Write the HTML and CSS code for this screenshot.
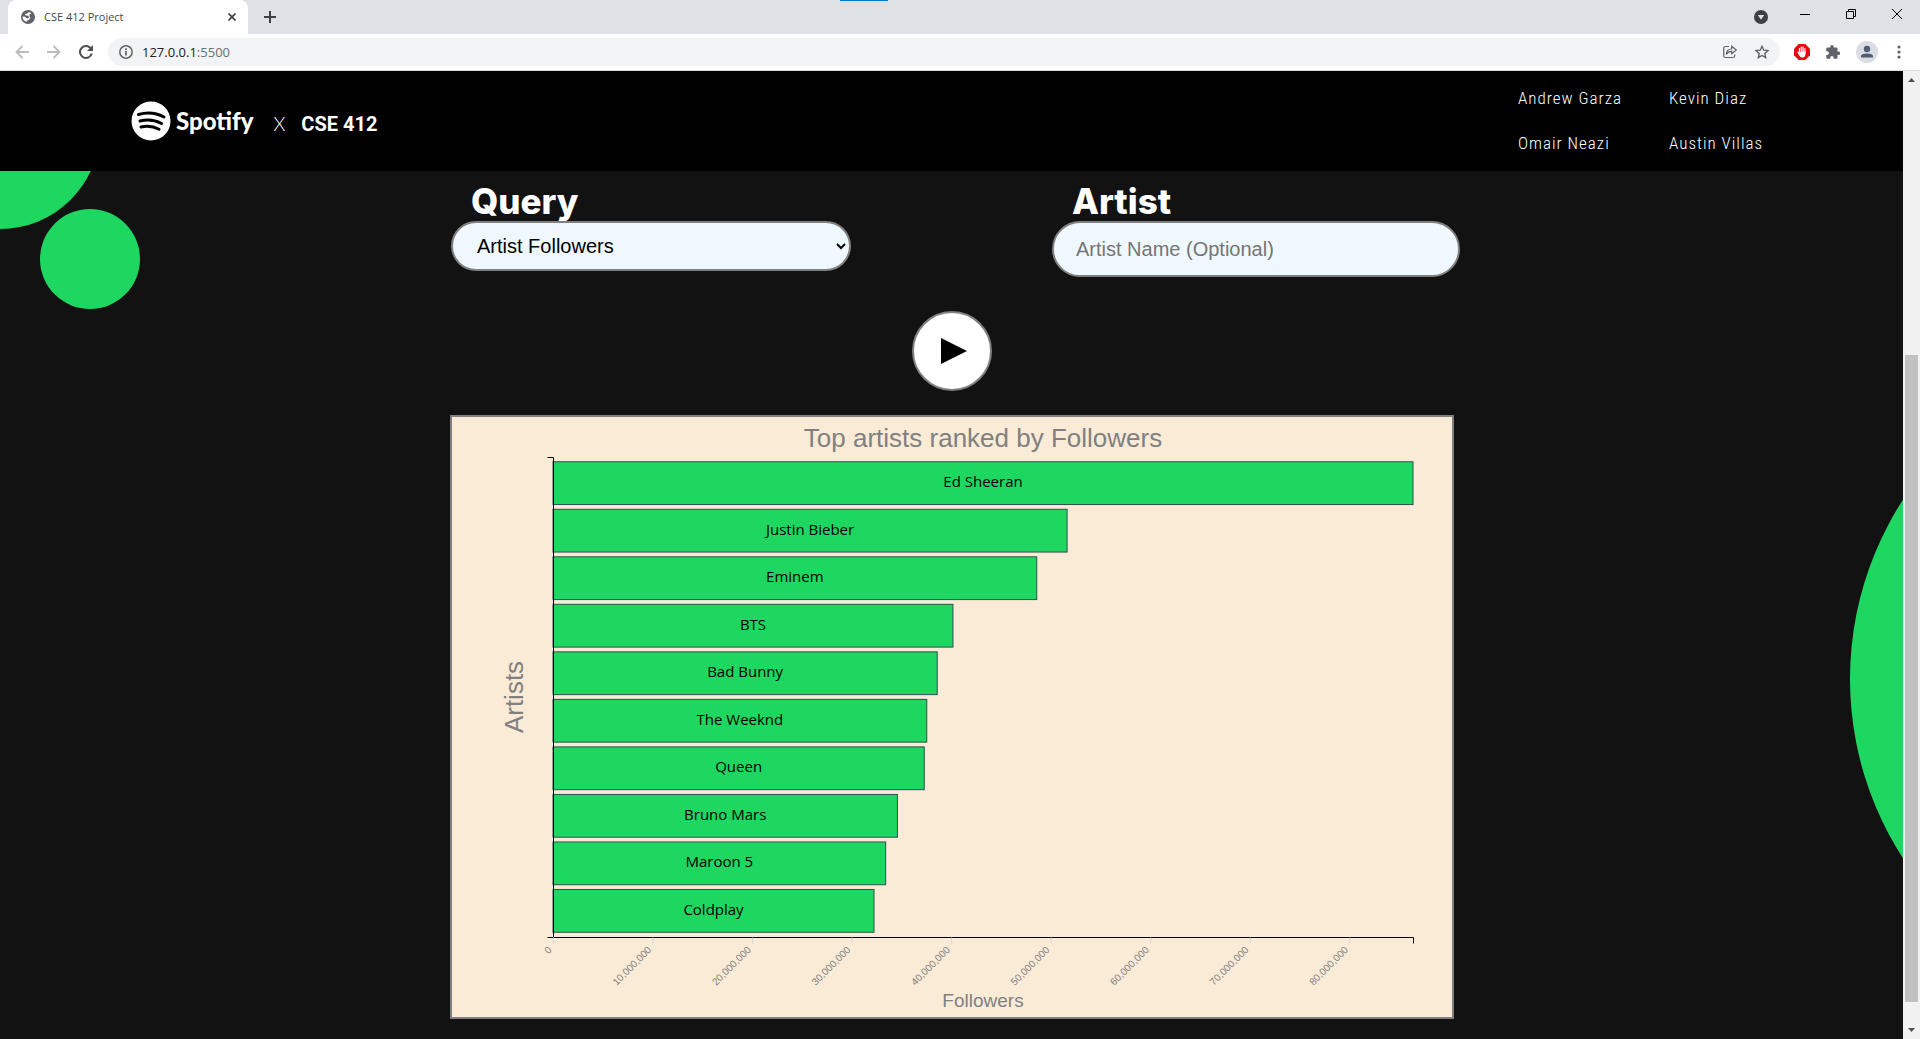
FILE: index.html
```html
<!DOCTYPE html>
<html lang="en">
<head>
<meta charset="utf-8">
<title>CSE 412 Project</title>
<link rel="stylesheet" href="styles.css">
</head>
<body>
<div class="tabstrip">
  <span class="load-bar"></span>
  <div class="tab">
    <svg width="14" height="14" viewBox="0 0 14 14"><circle cx="7" cy="7" r="7" fill="#5f6368"/><path d="M7.500 2.200L6 3.800q-1.500-.4-2.300.6L5 5.500l2.200.2 1 1.500-1.500 1.200-1.500-.4-1.200-1.200-2.500-.3q0 4 4 5.500l.6-1.600 2-.7 1.200-1.900-.9-1.900.3-1.700 1.800-.8Q9.500 2.300 7.500 2.200z" fill="#fff"/></svg>
    <span class="tab-title">CSE 412 Project</span>
    <button class="icon" aria-label="Close tab"><svg width="8" height="8" viewBox="0 0 8 8"><path d="M.5.5l7 7M7.500.5l-7 7" stroke="#3c4043" stroke-width="1.600"/></svg></button>
  </div>
  <button class="icon new-tab" aria-label="New tab"><svg width="12" height="12" viewBox="0 0 12 12"><path d="M6 0v12M0 6h12" stroke="#3c4043" stroke-width="2"/></svg></button>
  <div class="window-controls">
    <button class="icon" aria-label="Search tabs"><svg width="14" height="14" viewBox="0 0 14 14"><circle cx="7" cy="7" r="7" fill="#3c4043"/><path d="M3.800 5h6.400L7 9.800z" fill="#dee1e6"/></svg></button>
    <button class="icon" aria-label="Minimize"><svg width="10" height="10" viewBox="0 0 10 10"><path d="M0 5.500h10" stroke="#000"/></svg></button>
    <button class="icon" aria-label="Restore"><svg width="10" height="10" viewBox="0 0 10 10"><path d="M.5 2.500h7v7h-7zM2.500 2.500v-2h7v7h-2" fill="none" stroke="#000"/></svg></button>
    <button class="icon" aria-label="Close"><svg width="10" height="10" viewBox="0 0 10 10"><path d="M0 0l10 10M10 0L0 10" stroke="#000"/></svg></button>
  </div>
</div>
<div class="toolbar">
  <div class="nav-buttons">
    <button class="icon" aria-label="Back"><svg width="14" height="14" viewBox="0 0 14 14"><path d="M14 7H1.500M7.500 1L1.500 7l6 6" fill="none" stroke="#babcbe" stroke-width="1.800"/></svg></button>
    <button class="icon" aria-label="Forward"><svg width="14" height="14" viewBox="0 0 14 14"><path d="M0 7h12.500M6.500 1l6 6-6 6" fill="none" stroke="#babcbe" stroke-width="1.800"/></svg></button>
    <button class="icon" aria-label="Reload"><svg width="14" height="14" viewBox="0 0 14 14"><path d="M12.800 8.500A6 6 0 1 1 11.500 3" fill="none" stroke="#4c4f53" stroke-width="2"/><path d="M14 0v6H8z" fill="#4c4f53"/></svg></button>
  </div>
  <div class="omnibox">
    <svg width="14" height="14" viewBox="0 0 14 14"><circle cx="7" cy="7" r="6.200" fill="none" stroke="#5f6368" stroke-width="1.500"/><path d="M7 6v4.500M7 3.300v1.700" stroke="#5f6368" stroke-width="1.700"/></svg>
    <span class="url">127.0.0.1<span class="port">:5500</span></span>
    <button class="icon" aria-label="Share"><svg width="14" height="14" viewBox="0 0 14 14"><path d="M6 1.500H2.500Q.7 1.500.7 3.300v7.400q0 1.800 1.800 1.800h7.400q1.800 0 1.800-1.800V9.500M3.200 9.500Q3.500 4 8.700 4V1.200L13.400 5 8.700 8.700V6.400Q5 6.300 3.200 9.500z" fill="none" stroke="#5f6368" stroke-width="1.200"/></svg></button>
    <button class="icon" aria-label="Bookmark"><svg width="14" height="14" viewBox="0 0 14 14"><path d="M7 1.300l1.700 3.900 4.300.4-3.200 2.900.9 4.200L7 10.500l-3.700 2.200.9-4.200L1 5.600l4.300-.4z" fill="none" stroke="#5f6368" stroke-width="1.400"/></svg></button>
  </div>
  <div class="extensions">
    <button class="icon" aria-label="Ad blocker"><svg width="16" height="16" viewBox="0 0 16 16"><path d="M4.700 0h6.600L16 4.700v6.600L11.300 16H4.700L0 11.300V4.700z" fill="#e60a10"/><path d="M5.500 9V4.500M7.300 8V3M9.100 8V3M10.900 9V4.500" stroke="#fff" stroke-width="1.200" stroke-linecap="round"/><path d="M4.900 8l-1.200-.6q-.6.400-.2 1l1.700 3.200q1 1.900 3 1.900 3.300 0 3.300-3.500V7.500z" fill="#fff"/></svg></button>
    <button class="icon" aria-label="Extensions"><svg width="14" height="14" viewBox="0 0 14 14"><path d="M12.500 6.500h-1V3.800q0-1.300-1.300-1.300H7.700v-.8a1.700 1.700 0 0 0-3.400 0v.8H1.600Q.3 2.500.3 3.800v2.500h.9a1.800 1.800 0 0 1 0 3.600H.3v2.600q0 1.300 1.300 1.300h2.500v-.9a1.800 1.800 0 0 1 3.600 0v.9h2.500q1.300 0 1.300-1.300V9.900h1a1.700 1.700 0 0 0 0-3.400z" fill="#5f6368"/></svg></button>
    <button class="icon" aria-label="Profile"><svg width="22" height="22" viewBox="0 0 22 22"><circle cx="11" cy="11" r="11" fill="#dadde3"/><circle cx="11" cy="8" r="3.200" fill="#505d73"/><path d="M5 16.500v-1.300q0-2.700 6-2.700t6 2.700v1.300z" fill="#505d73"/></svg></button>
    <button class="icon" aria-label="Menu"><svg width="4" height="14" viewBox="0 0 4 14"><circle cx="2" cy="2" r="1.600" fill="#5f6368"/><circle cx="2" cy="7" r="1.600" fill="#5f6368"/><circle cx="2" cy="12" r="1.600" fill="#5f6368"/></svg></button>
  </div>
</div>
<div class="viewport">
  <div class="page">
    <header class="site-header">
      <div class="brand">
        <svg width="40" height="40" viewBox="0 0 40 40"><circle cx="20" cy="20" r="19.500" fill="#fff"/><path d="M7.500 13.500Q21 9.500 33 16M9 20q11.500-3 21.500 2.500M10 26q9.500-2.300 18 2.300" fill="none" stroke="#000" stroke-linecap="round" stroke-width="3"/></svg>
        <span class="brand-name">Spotify</span>
        <span class="brand-x">X</span>
        <span class="brand-course">CSE 412</span>
      </div>
      <nav class="authors">
        <a href="#">Andrew Garza</a>
        <a href="#">Kevin Diaz</a>
        <a href="#">Omair Neazi</a>
        <a href="#">Austin Villas</a>
      </nav>
    </header>
    <main class="content">
      <span class="bubble bubble-top"></span>
      <span class="bubble bubble-small"></span>
      <span class="bubble bubble-right"></span>
      <form class="query-form" onsubmit="return false">
        <div class="fields">
          <div class="field">
            <label for="query">Query</label>
            <select id="query"><option>Artist Followers</option></select>
          </div>
          <div class="field">
            <label for="artist">Artist</label>
            <input id="artist" type="text" placeholder="Artist Name (Optional)">
          </div>
        </div>
        <button class="play" type="submit" aria-label="Run query"><svg width="26" height="26" viewBox="0 0 26 26"><path d="M0 0l26 13L0 26z"/></svg></button>
      </form>
      <svg id="chart" class="chart" viewBox="0 0 1000 600" role="img" aria-label="Top artists ranked by Followers"></svg>
    </main>
  </div>
  <div class="scrollbar" aria-hidden="true">
    <svg width="17" height="17" viewBox="0 0 17 17"><path d="M5 11l3.500-4 3.500 4z" fill="#505050"/></svg>
    <span class="track-before"></span>
    <span class="thumb"></span>
    <span class="track-after"></span>
    <svg width="17" height="17" viewBox="0 0 17 17"><path d="M5 6l3.500 4L12 6z" fill="#505050"/></svg>
  </div>
</div>
<script src="script.js"></script>
</body>
</html>
```
FILE: styles.css
```css
* { box-sizing: border-box; }

body {
  margin: 0;
  min-height: 100vh;
  display: flex;
  flex-direction: column;
  background: #121212;
  font-family: "Liberation Sans", Arial, sans-serif;
}

svg { display: block; }

.icon {
  display: flex;
  padding: 0;
  border: 0;
  background: none;
}

/* Browser frame */
.tabstrip {
  position: relative;
  display: flex;
  align-items: center;
  height: 34px;
  padding-left: 8px;
  background: #dee1e6;
}

.load-bar {
  position: absolute;
  top: 0;
  left: 840px;
  width: 48px;
  height: 1px;
  background: #0078d7;
}

.tab {
  display: flex;
  align-items: center;
  gap: 9px;
  width: 240px;
  height: 34px;
  padding: 0 12px 0 13px;
  border-radius: 8px 8px 0 0;
  background: #fff;
}

.tab-title {
  flex: 1;
  font: 11px/16px "Open Sans", sans-serif;
  color: #45494d;
}

.new-tab { margin-left: 16px; }

.window-controls {
  display: flex;
  align-items: center;
  gap: 36px;
  margin-left: auto;
  padding: 0 18px 6px 0;
}

.window-controls .icon:first-child {
  margin-right: -4px;
  padding-top: 6px;
}

.toolbar {
  display: flex;
  align-items: center;
  height: 37px;
  padding: 0 19px 0 15px;
  border-bottom: 1px solid #d9dbdd;
  background: #fff;
}

.nav-buttons {
  display: flex;
  gap: 18px;
  margin-right: 15px;
}

.omnibox {
  flex: 1;
  display: flex;
  align-items: center;
  gap: 18px;
  height: 28px;
  padding: 0 11px;
  border-radius: 14px;
  background: #f1f3f4;
}

.url {
  flex: 1;
  margin-left: -9px;
  font: 13px/18px "Open Sans", sans-serif;
  color: #202124;
}

.port { color: #6b6f73; }

.extensions {
  display: flex;
  align-items: center;
  gap: 16px;
  padding-left: 14px;
}

.extensions .icon:last-child { margin-left: 3px; }

.viewport {
  flex: 1;
  display: flex;
}

.scrollbar {
  display: flex;
  flex-direction: column;
  align-items: center;
  width: 17px;
  background: #f1f1f1;
}

.track-before { flex: 267; }
.thumb { flex: 647; width: 13px; background: #c1c1c1; }
.track-after { flex: 20; }

/* Page */
.page {
  flex: 1;
  display: flex;
  flex-direction: column;
}

.site-header {
  display: flex;
  justify-content: space-between;
  align-items: center;
  padding: 5px 83px 5px 131px;
  background: #000;
  color: #fff;
}

.brand {
  display: flex;
  align-items: center;
  line-height: 40px;
}

.brand-name {
  margin-left: 5px;
  font-family: Lato, sans-serif;
  font-size: 24px;
  font-weight: 900;
}

.brand-x,
.brand-course { padding-top: 5px; }

.brand-x {
  margin: 0 16px 0 20px;
  font-family: Lato, sans-serif;
  font-size: 19px;
  font-weight: 300;
}

.brand-course {
  font-family: Roboto, sans-serif;
  font-size: 20px;
  font-weight: 700;
}

.authors {
  display: grid;
  grid-template-columns: 151px 151px;
}

.authors a {
  font: 300 17px/45px "Roboto Condensed", Roboto, sans-serif;
  letter-spacing: 1px;
  color: #fff;
  text-decoration: none;
}

.content {
  position: relative;
  flex: 1;
  padding: 10px 0 20px;
  overflow: hidden;
}

.bubble {
  position: absolute;
  border-radius: 50%;
  background: #1ed760;
}

.bubble-top { top: -142px; left: -100px; width: 200px; height: 200px; }
.bubble-small { top: 38px; left: 40px; width: 100px; height: 100px; }
.bubble-right { top: 178px; right: -607px; width: 660px; height: 660px; }

.query-form {
  position: relative;
  display: flex;
  flex-direction: column;
  align-items: center;
  gap: 34px;
}

.fields {
  display: flex;
  justify-content: center;
  gap: 201px;
  padding-left: 8px;
}

.field {
  display: flex;
  flex-direction: column;
}

.field label {
  padding-left: 20px;
  font: 800 35px/40px Inter, sans-serif;
  color: #fff;
}

.field select,
.field input {
  border: 2px solid gray;
  border-radius: 28px;
  background: aliceblue;
  font: 20px "Liberation Sans", Arial, sans-serif;
}

.field select {
  width: 400px;
  height: 50px;
  padding: 0 0 0 20px;
  color: #000;
}

.field input {
  width: 408px;
  height: 56px;
  padding: 0 22px;
}

.field input::placeholder { color: #757575; }

.play {
  display: flex;
  align-items: center;
  justify-content: center;
  width: 80px;
  height: 80px;
  padding: 0 0 0 4px;
  border: 2px solid gray;
  border-radius: 50%;
  background: #fff;
}

.chart {
  position: relative;
  width: 100%;
  max-width: 1004px;
  margin: 24px auto 0;
  border: 2px solid gray;
  background: antiquewhite;
}

.chart text {
  font-family: "Liberation Sans", Arial, sans-serif;
  fill: gray;
}

.chart .title { font-size: 26px; text-anchor: middle; }
.chart .axis-name { font-size: 19px; text-anchor: middle; }
.chart .tick { font-size: 10px; text-anchor: end; }
.chart .name {
  font-family: "Trebuchet MS", "Open Sans", sans-serif;
  font-size: 15px;
  text-anchor: middle;
  fill: #000;
}
.chart .bar { fill: #1ed760; stroke: #2f4f4f; }
.chart .axis { fill: none; stroke: #000; }
.chart .tick-line { stroke: lightgray; }
```
FILE: script.js
```js
const artists = [
  ["Ed Sheeran", 86400000],
  ["Justin Bieber", 51650000],
  ["Eminem", 48600000],
  ["BTS", 40180000],
  ["Bad Bunny", 38600000],
  ["The Weeknd", 37550000],
  ["Queen", 37300000],
  ["Bruno Mars", 34600000],
  ["Maroon 5", 33420000],
  ["Coldplay", 32250000]
];

const left = 101, top_ = 40, width = 860, height = 480;
const max = artists[0][1];
const step = height / (artists.length + 0.1);
const band = step * 0.9;
const chart = document.getElementById("chart");

function add(tag, attrs, text) {
  const el = document.createElementNS("http://www.w3.org/2000/svg", tag);
  for (const key in attrs) el.setAttribute(key, attrs[key]);
  if (text) el.textContent = text;
  chart.appendChild(el);
}

artists.forEach(([name, followers], i) => {
  const y = top_ + step * (i + 0.1);
  const w = width * followers / max;
  add("rect", { class: "bar", x: left, y: y, width: w, height: band });
  add("text", { class: "name", x: left + w / 2, y: y + band / 2 + 4 }, name);
});

const bottom = top_ + height + 0.5;
const axis = left + 0.5;
add("path", { class: "axis", d: `M${axis - 6} ${top_ + 0.5}H${axis}V${bottom}H${axis - 6}` });
add("path", { class: "axis", d: `M${axis} ${bottom}H${axis + width}v6` });

for (let n = 0; n < max; n += 10000000) {
  const x = axis + width * n / max;
  add("path", { class: "tick-line", d: `M${x} ${bottom}v6` });
  add("text", { class: "tick", transform: `translate(${x - 1},${bottom + 13}) rotate(-45)` }, n ? n.toLocaleString("en-US") : "0");
}

add("text", { class: "title", x: left + width / 2, y: 30 }, "Top artists ranked by Followers");
add("text", { class: "axis-name", x: left + width / 2, y: 590 }, "Followers");
add("text", { class: "title", transform: "translate(71,280) rotate(-90)" }, "Artists");
```
